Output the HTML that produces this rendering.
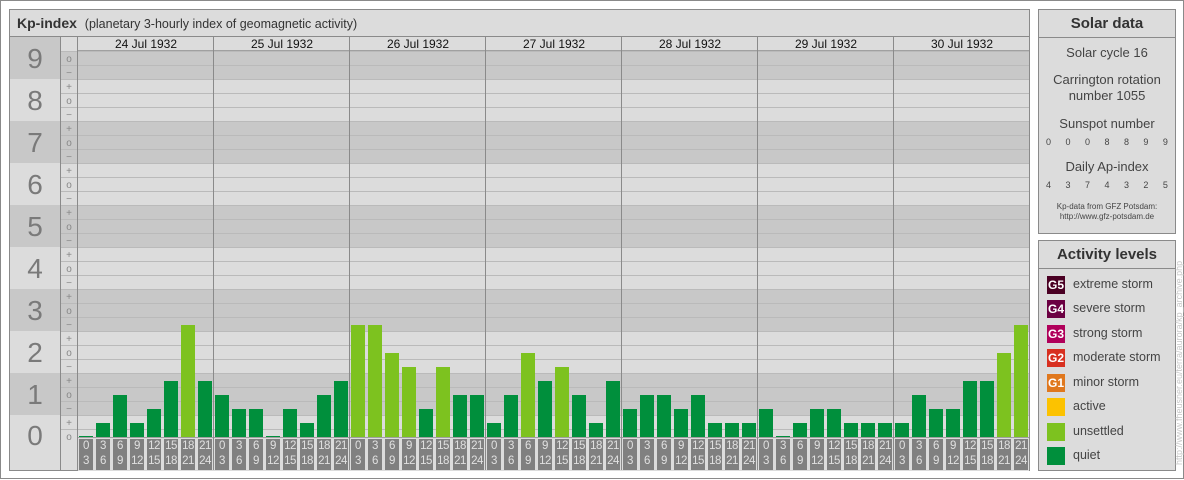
<!DOCTYPE html>
<html><head><meta charset="utf-8"><style>
*{margin:0;padding:0;box-sizing:border-box}
body{width:1184px;height:480px;background:#fff;font-family:"Liberation Sans",sans-serif;position:relative;overflow:hidden}
.a{position:absolute}
#outer{left:0;top:0;width:1184px;height:479px;border:1px solid #8a8a8a}
#main{left:9px;top:9px;width:1021px;height:462px;border:1px solid #8a8a8a;background:#dcdcdc}
.rp{position:absolute;left:1038px;width:138px;border:1px solid #8a8a8a;background:#dcdcdc;color:#444;text-align:center}
.rp h2{font-size:15px;font-weight:bold;height:28px;line-height:28px;border-bottom:1px solid #8a8a8a;color:#333}
.lv{position:absolute;left:8px;font-size:12.5px;color:#444}
.lv span{position:absolute;left:0;top:0;width:18px;height:18px;color:#fff;font-size:12px;font-weight:bold;line-height:18px;text-align:center}
.lv b{position:absolute;left:26px;top:1px;font-weight:normal;white-space:nowrap}
.dg{font-size:9px;display:flex;justify-content:space-between;padding:0 7px}
.dg i{font-style:normal}
</style></head><body>
<div class="a" id="outer"></div>
<div class="a" id="main"></div>
<div class="a" style="left:10px;top:10px;width:1019px;height:27px;border-bottom:1px solid #8a8a8a;line-height:26px;padding-left:7px;color:#333;font-size:14px"><b>Kp-index</b> <span style="font-size:12.5px;margin-left:4px">(planetary 3-hourly index of geomagnetic activity)</span></div>
<div id="chart"></div>
<div class="rp" style="top:9px;height:225px">
<h2>Solar data</h2>
<div style="font-size:13px;margin-top:7px">Solar cycle 16</div>
<div style="font-size:13px;margin-top:12px;line-height:16px">Carrington rotation<br>number 1055</div>
<div style="font-size:13px;margin-top:12px">Sunspot number</div>
<div class="dg" style="margin-top:6px"><i>0</i><i>0</i><i>0</i><i>8</i><i>8</i><i>9</i><i>9</i></div>
<div style="font-size:13px;margin-top:12px">Daily Ap-index</div>
<div class="dg" style="margin-top:6px"><i>4</i><i>3</i><i>7</i><i>4</i><i>3</i><i>2</i><i>5</i></div>
<div style="font-size:8px;margin-top:12px;line-height:10px">Kp-data from GFZ Potsdam:<br>http://www.gfz-potsdam.de</div>
</div>
<div class="rp" style="top:240px;height:231px">
<h2>Activity levels</h2>
<div class="lv" style="top:35px"><span style="background:#4a0023">G5</span><b>extreme storm</b></div>
<div class="lv" style="top:59px"><span style="background:#6b0042">G4</span><b>severe storm</b></div>
<div class="lv" style="top:84px"><span style="background:#b0005a">G3</span><b>strong storm</b></div>
<div class="lv" style="top:108px"><span style="background:#d83020">G2</span><b>moderate storm</b></div>
<div class="lv" style="top:133px"><span style="background:#e0781e">G1</span><b>minor storm</b></div>
<div class="lv" style="top:157px"><span style="background:#fcc200"></span><b>active</b></div>
<div class="lv" style="top:182px"><span style="background:#7dc21f"></span><b>unsettled</b></div>
<div class="lv" style="top:206px"><span style="background:#008f3c"></span><b>quiet</b></div>
</div>
<div class="a" style="left:1174px;top:465px;transform:rotate(-90deg);transform-origin:0 0;font-size:9px;color:#c8c8c8;white-space:nowrap;width:215px">http://www.fheusner.eu/terra/aurora/kp_archive.php</div>
<script>
var h='';
for(var k=9;k>=0;k--){var t=37+(9-k)*42;var hh=(k==0)?22:42;var c=(k%2==1)?'#c8c8c8':'#dcdcdc';
h+='<div class="a" style="left:10px;top:'+t+'px;width:1019px;height:'+hh+'px;background:'+c+'"></div>';
if(k>0)h+='<div class="a" style="left:10px;top:'+(t+5)+'px;width:50px;text-align:center;font-size:28px;color:#7a7a7a;line-height:34px">'+k+'</div>';}
h+='<div class="a" style="left:10px;top:415px;width:50px;height:55px;background:#dcdcdc"></div>';
h+='<div class="a" style="left:10px;top:415px;width:50px;text-align:center;font-size:28px;color:#7a7a7a;line-height:42px">0</div>';
h+='<div class="a" style="left:60px;top:37px;width:969px;height:14px;background:#dcdcdc"></div>';
for(var y=51;y<437;y+=14){h+='<div class="a" style="left:60px;top:'+y+'px;width:969px;height:1px;background:#bababa"></div>';}
for(var n=0;n<=27;n++){var lab=(n%3==0)?'o':(n%3==1)?'+':'−';
h+='<div class="a" style="left:60px;top:'+(437-14*n-5)+'px;width:18px;text-align:center;font-size:10px;color:#888;line-height:12px">'+lab+'</div>';}
h+='<div class="a" style="left:60px;top:37px;width:1px;height:433px;background:#8a8a8a"></div>';
h+='<div class="a" style="left:77px;top:37px;width:1px;height:433px;background:#8a8a8a"></div>';
h+='<div class="a" style="left:78px;top:437px;width:951px;height:34px;background:#dcdcdc"></div>';
h+='<div class="a" style="left:78px;top:50px;width:951px;height:1px;background:#a0a0a0"></div>';
h+='<div class="a" style="left:78px;top:437px;width:951px;height:1px;background:#a0a0a0"></div>';
var days=['24','25','26','27','28','29','30'];
for(var d=0;d<7;d++){var x=78+d*136;
if(d>0)h+='<div class="a" style="left:'+(x-1)+'px;top:37px;width:1px;height:433px;background:#8a8a8a"></div>';
h+='<div class="a" style="left:'+x+'px;top:37px;width:136px;text-align:center;font-size:12px;line-height:15px;color:#111">'+days[d]+' Jul 1932</div>';}
var v=[0,1,3,1,2,4,8,4, 3,2,2,0,2,1,3,4, 8,8,6,5,2,5,3,3, 1,3,6,4,5,3,1,4, 2,3,3,2,3,1,1,1, 2,0,1,2,2,1,1,1, 1,3,2,2,4,4,6,8];
var hr=['0','3','6','9','12','15','18','21','24'];
for(var i=0;i<56;i++){var x=79+17*i;var bh=v[i]==0?1:14*v[i];var c=v[i]>=5?'#7dc21f':'#008f3c';
h+='<div class="a" style="left:'+x+'px;top:'+(437-bh)+'px;width:14px;height:'+bh+'px;background:'+c+'"></div>';
var j=i%8;
h+='<div class="a" style="left:'+x+'px;top:439px;width:14px;height:31px;background:#808080;color:#e0e0e0;font-size:11.5px;line-height:15px;text-align:center;letter-spacing:-0.5px">'+hr[j]+'<br>'+hr[j+1]+'</div>';}
document.getElementById('chart').innerHTML=h;
</script>
</body></html>
